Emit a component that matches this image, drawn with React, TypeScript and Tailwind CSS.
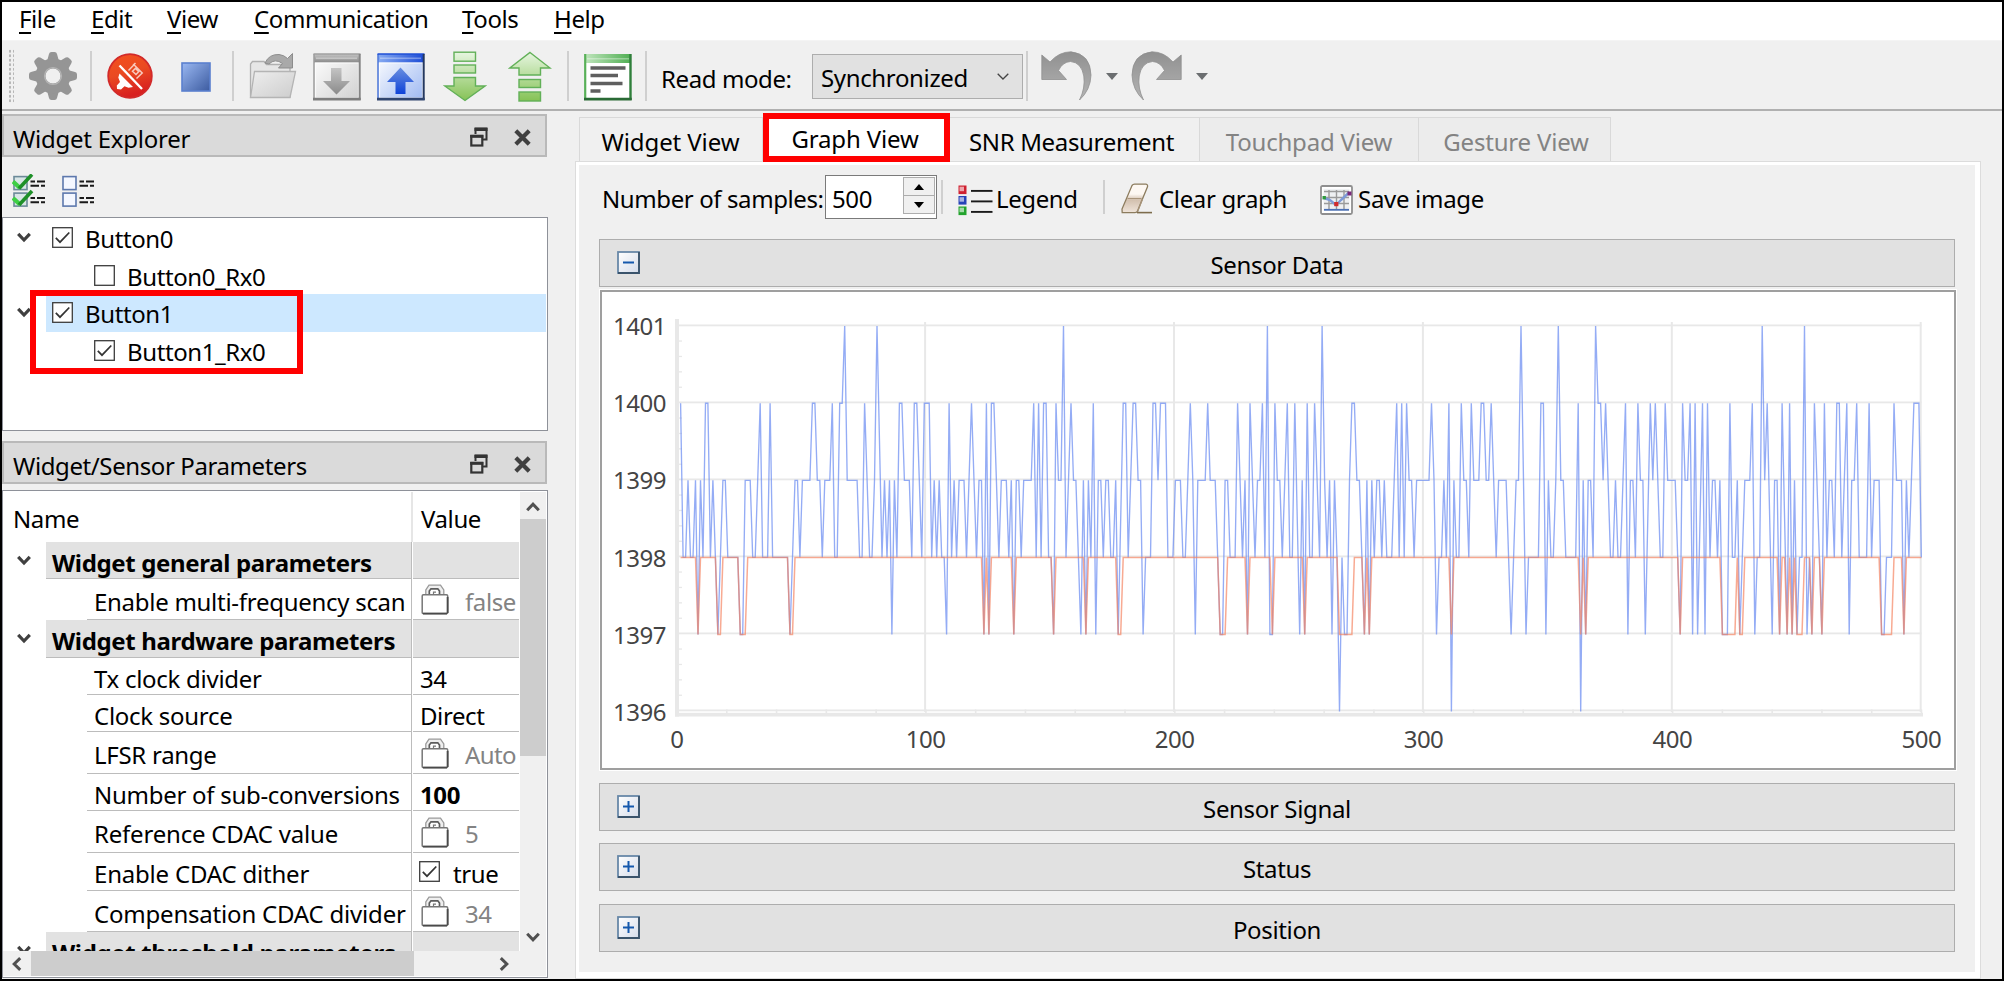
import React from "react";

/* ---------- chart data: "sample:level" pairs, level counted up from 1396 ---------- */

const RAW_POINTS = `
1:4 2:2 3:2 4:3 5:2 6:2 7:3 8:1 9:3 10:2 11:4 12:4 13:2 14:3 15:2 16:1 18:3 19:3 20:2 24:2 25:1 26:1 27:3 29:3 30:2 31:2
33:4 34:2 36:2 37:4 38:2 44:2 45:1 47:3 48:3 49:2 50:3 53:3 54:4 55:4 56:3 57:3 58:2 59:3 61:3 62:4 63:2 64:2 65:4 66:4
67:5 68:3 72:3 73:2 74:2 75:4 77:2 78:2 79:3 80:5 82:2 83:3 84:2 85:3 86:1 87:3 88:2 89:4 90:4 91:3 93:3 94:2 95:4 96:4
98:2 99:4 101:4 102:2 103:3 104:2 105:3 106:2 107:2 108:1 109:4 110:2 111:3 112:2 113:3 115:3 116:2 118:4 120:2 121:3
122:3 123:1 124:4 125:1 126:4 127:4 129:2 130:3 132:3 133:2 134:3 135:1 136:3 137:3 138:2 139:3 142:3 143:4 144:2 145:4
146:2 147:4 148:4 149:2 150:2 151:1 152:4 153:3 154:3 155:5 156:2 158:4 159:3 160:3 162:1 163:3 164:1 165:3 166:2 167:4
168:1 169:3 170:3 171:2 172:3 173:3 174:2 175:2 176:3 177:1 179:4 180:4 181:2 183:4 184:4 185:3 186:3 187:1 188:2 190:2
191:4 192:4 193:3 194:4 196:4 197:2 199:2 200:3 202:3 203:2 204:2 206:4 207:3 208:1 209:3 212:3 213:4 214:3 216:3 217:2
218:1 219:1 220:3 221:3 222:2 224:2 225:4 227:2 228:3 229:1 230:4 232:2 233:3 234:3 235:4 236:2 237:5 238:1 239:1 240:4
241:3 242:3 243:2 245:4 246:2 247:2 248:4 250:1 251:3 252:1 253:4 254:2 255:2 256:4 258:2 259:5 260:3 261:2 262:3 263:1
264:3 265:2 266:0 267:2 268:1 269:1 270:3 271:4 272:4 273:3 274:3 275:2 276:1 277:3 278:1 279:3 280:2 281:3 282:3 283:2
284:3 285:2 287:2 289:4 290:2 291:4 292:2 293:4 294:3 295:3 296:2 297:3 302:3 303:4 304:3 305:1 306:2 307:2 308:3 309:2
310:4 311:0 312:3 313:2 314:2 315:4 316:3 317:3 318:2 319:4 320:3 322:3 323:4 324:4 325:3 326:3 327:4 329:2 330:3 333:3
335:1 337:3 338:3 339:5 341:1 342:2 346:2 347:4 348:4 349:1 350:3 351:2 352:2 353:3 354:5 355:3 356:3 357:2 361:2 362:4
363:0 364:3 365:1 366:3 367:3 368:2 369:5 370:4 371:4 372:3 373:4 375:2 376:2 377:3 378:2 379:2 380:3 381:4 382:1 383:3
384:3 385:2 386:4 387:3 388:3 389:1 391:4 392:3 393:4 395:2 396:2 397:4 398:3 401:3 403:1 404:4 405:3 406:3 407:4 408:1
409:4 410:1 412:4 413:1 414:4 415:2 416:3 417:3 418:2 419:3 420:1 422:1 423:4 424:2 425:2 426:3 427:1 428:2 429:3 431:3
432:4 433:1 434:2 435:2 436:5 437:3 438:4 440:1 441:3 442:3 443:1 444:4 446:1 447:4 448:1 449:3 450:1 451:2 452:2 453:5
454:1 455:2 456:1 457:4 460:1 461:4 462:2 463:3 464:3 465:2 466:4 467:4 468:2 470:4 471:1 472:3 473:3 474:4 475:2 478:2
479:4 480:2 481:3 483:3 484:1 485:1 486:2 488:2 489:4 490:3 492:3 493:1 494:3 495:2 497:4 499:4 500:2`;

/* Spans of samples where the baseline drops from 1398 to 1397. */
const BASELINE_DIPS: [number, number][] = [
  [8, 8], [16, 17], [25, 27], [45, 46], [123, 123], [125, 125], [135, 135], [151, 151], [164, 164],
  [177, 178], [218, 220], [229, 229], [239, 239], [252, 252], [266, 271], [276, 276], [278, 278],
  [311, 311], [363, 363], [365, 365], [403, 403], [420, 425], [427, 428], [443, 443], [446, 446],
  [448, 448], [450, 452], [456, 456], [460, 460], [484, 488], [493, 493],
];

const sx = (i: number) => 678.1 + i * 2.4865;
const sy = (level: number) => 711.6 - level * 77.1;
const toPoint = (i: number, level: number) => `${sx(i).toFixed(1)},${sy(level).toFixed(1)}`;

const rawLine = RAW_POINTS.trim()
  .split(/\s+/)
  .map((p) => p.split(":").map(Number))
  .map(([i, v]) => toPoint(i, v))
  .join(" ");

const baseLine = [
  toPoint(1, 2),
  ...BASELINE_DIPS.flatMap(([a, b]) => [toPoint(a - 1, 2), toPoint(a, 1), toPoint(b, 1), toPoint(b + 1, 2)]),
  toPoint(500, 2),
].join(" ");

function Chart() {
  const xs = [0, 100, 200, 300, 400, 500];
  const ys = [0, 1, 2, 3, 4, 5];
  return (
    <svg className="block" width="1352" height="476" viewBox="602 292 1352 476">
      <g fill="#e8e8e8">
        {ys.map((v) => (
          <rect key={v} x="679" y={709.5 - v * 77} width="1242.5" height="1.8" />
        ))}
        {xs.slice(1).map((v) => (
          <rect key={v} x={675.2 + v * 2.489} y="322" width="2" height="390" />
        ))}
        {ys.slice(0, 5).flatMap((v) =>
          [1, 2, 3, 4].map((k) => (
            <rect key={`${v}-${k}`} x="679" y={710 - v * 77 - k * 15.4} width="3" height="1.3" />
          )),
        )}
        {Array.from({ length: 25 }, (_, k) => (
          <rect key={k} x={676.2 + (k + 1) * 49.78} y="709.5" width="1.6" height="4" />
        ))}
        <rect x="675" y="319" width="4" height="397.5" />
        <rect x="675" y="712.8" width="1248" height="3.7" />
      </g>
      <polyline points={rawLine} fill="none" stroke="#6f8ff2" strokeOpacity="0.74" strokeWidth="1.35" />
      <polyline points={baseLine} fill="none" stroke="#f4825f" strokeOpacity="0.68" strokeWidth="1.5" />
      <g fill="#444" fontSize="24" letterSpacing="-0.5">
        {ys.map((v) => (
          <text key={v} x="666" y={720.7 - v * 77.1} textAnchor="end">
            {1396 + v}
          </text>
        ))}
        {xs.map((v) => (
          <text key={v} x={676.8 + v * 2.489} y="747.6" textAnchor="middle">
            {v}
          </text>
        ))}
      </g>
    </svg>
  );
}

/* ---------- icons ---------- */

const Gradients = () => (
  <svg width="0" height="0" className="absolute">
    <defs>
      <linearGradient id="gRed" x1="0" y1="0" x2="0.3" y2="1">
        <stop offset="0" stopColor="#f4511e" />
        <stop offset="0.5" stopColor="#ea4a22" />
        <stop offset="1" stopColor="#d8201f" />
      </linearGradient>
      <linearGradient id="gStop" x1="0" y1="0" x2="1" y2="1">
        <stop offset="0" stopColor="#9ab8f2" />
        <stop offset="1" stopColor="#3c5ba0" />
      </linearGradient>
      <linearGradient id="gFolder" x1="0" y1="0" x2="1" y2="1">
        <stop offset="0" stopColor="#eeeeee" />
        <stop offset="1" stopColor="#cdcdcd" />
      </linearGradient>
      <linearGradient id="gGray" x1="0" y1="0" x2="0" y2="1">
        <stop offset="0" stopColor="#c4c4c4" />
        <stop offset="1" stopColor="#8a8a8a" />
      </linearGradient>
      <linearGradient id="gGrayBody" x1="0" y1="0" x2="1" y2="1">
        <stop offset="0" stopColor="#ffffff" />
        <stop offset="1" stopColor="#d0d0d0" />
      </linearGradient>
      <linearGradient id="gBlueBar" x1="0" y1="0" x2="1" y2="0">
        <stop offset="0" stopColor="#86aaf2" />
        <stop offset="1" stopColor="#1c4bd6" />
      </linearGradient>
      <linearGradient id="gBlueBody" x1="0" y1="0" x2="1" y2="1">
        <stop offset="0" stopColor="#ffffff" />
        <stop offset="1" stopColor="#9db8f2" />
      </linearGradient>
      <linearGradient id="gBlueArrow" x1="0" y1="0" x2="0" y2="1">
        <stop offset="0" stopColor="#6a8fe0" />
        <stop offset="1" stopColor="#0f43d8" />
      </linearGradient>
      <linearGradient id="gGreen" gradientUnits="userSpaceOnUse" x1="0" y1="0" x2="0" y2="50">
        <stop offset="0" stopColor="#e9f7e4" />
        <stop offset="1" stopColor="#85c255" />
      </linearGradient>
      <linearGradient id="gGreenBar" x1="0" y1="0" x2="1" y2="0">
        <stop offset="0" stopColor="#bfe5bc" />
        <stop offset="1" stopColor="#4fae52" />
      </linearGradient>
      <linearGradient id="gUndo" x1="0" y1="0" x2="0" y2="1">
        <stop offset="0" stopColor="#909090" />
        <stop offset="1" stopColor="#b4b4b4" />
      </linearGradient>
      <linearGradient id="gBox" x1="0" y1="0" x2="1" y2="1">
        <stop offset="0" stopColor="#ffffff" />
        <stop offset="1" stopColor="#d5dcea" />
      </linearGradient>
      <linearGradient id="gEraser" x1="0" y1="0" x2="0" y2="1">
        <stop offset="0.35" stopColor="#fdf8f3" />
        <stop offset="0.55" stopColor="#d2c0ae" />
        <stop offset="1" stopColor="#efe4da" />
      </linearGradient>
    </defs>
  </svg>
);

function GearIcon() {
  return (
    <svg className="shrink-0" width="48" height="50" viewBox="-24 -25 48 50">
      <g fill="#959595">
        {[0, 45, 90, 135, 180, 225, 270, 315].map((a) => (
          <path key={a} transform={`rotate(${a})`} d="M-6.2-14 L-4-22 Q-3.6-24-1.5-24 H1.5 Q3.6-24 4-22 L6.2-14Z" />
        ))}
        <path fillRule="evenodd" d="M0-17.5A17.5 17.5 0 1 0 0 17.5A17.5 17.5 0 1 0 0-17.5ZM0-7.6A7.6 7.6 0 1 1 0 7.6A7.6 7.6 0 1 1 0-7.6Z" />
      </g>
      <circle r="8.4" fill="none" stroke="#b5b5b5" strokeWidth="1.4" />
    </svg>
  );
}

function DisconnectIcon() {
  return (
    <svg className="shrink-0" width="46" height="46" viewBox="0 0 46 46">
      <circle cx="23" cy="23" r="21.8" fill="url(#gRed)" stroke="#d22a2a" strokeWidth="1.8" />
      <path d="M12.5 20.5 L26 34 L21.5 34.8 L17.5 33.2 L14 36.6 L10 36 L9.8 32.5 L13 29 L11.3 24.5Z" fill="#fff" />
      <path d="M12.5 12.5 L35 36" stroke="#fff" strokeWidth="2.4" />
      <path d="M21.5 17.5 L27 11.8 L35.2 20 L29.5 25.5 M25.5 18.2 L28.5 15.4 L31.8 18.6 L29 21.5Z M26 12.4 L28.5 10" stroke="#f9c9bd" strokeWidth="1.5" fill="none" />
    </svg>
  );
}

function StopIcon() {
  return (
    <svg className="shrink-0" width="30" height="30" viewBox="0 0 30 30">
      <rect x="1" y="1" width="28" height="28" fill="url(#gStop)" stroke="#5b80cf" strokeWidth="1.6" />
    </svg>
  );
}

function OpenIcon() {
  return (
    <svg className="shrink-0" width="48" height="48" viewBox="0 0 48 48">
      <path d="M1.5 45 V12 L3.5 9.5 H15 L17.5 12.5 H41 V45Z" fill="#e6e6e6" stroke="#b0b0b0" strokeWidth="1.3" />
      <path d="M5.5 19.5 H46.5 L41 45.5 H1.5Z" fill="url(#gFolder)" stroke="#b4b4b4" strokeWidth="1.3" />
      <path d="M16 11 Q20 2 30 2.5 Q35 3 38.5 6.5 L43.5 1.5 V16 H29.5 L33.5 11.5 Q26 6 20 12Z" fill="#a9a9a9" stroke="#8d8d8d" strokeWidth="1" />
    </svg>
  );
}

function WindowArrowIcon({ up }: { up?: boolean }) {
  return (
    <svg className="shrink-0" width="48" height="48" viewBox="0 0 48 48">
      <rect x="1" y="1" width="46" height="46" fill={up ? "url(#gBlueBody)" : "url(#gGrayBody)"} />
      <rect x="1" y="1" width="46" height="8.5" fill={up ? "url(#gBlueBar)" : "url(#gGray)"} />
      <rect x="3" y="4.5" width="41" height="1.6" fill="#fff" opacity="0.35" />
      <rect x="2.5" y="10" width="43" height="35" fill="none" stroke="#fff" strokeWidth="1.2" opacity="0.7" />
      <path d="M1 47 V1" stroke={up ? "#4b76d8" : "#9c9c9c"} strokeWidth="1.5" />
      <path d="M0.5 1 H47.5" stroke={up ? "#1f4fd6" : "#a0a0a0"} strokeWidth="1.5" />
      <path d="M46.7 1 V47" stroke={up ? "#24385f" : "#858585"} strokeWidth="2" />
      <path d="M0 46.2 H47.7" stroke={up ? "#30456f" : "#7d7d7d"} strokeWidth="2.8" />
      {up ? (
        <path d="M23.5 14.5 L37 29 H28.5 V41 H18.5 V29 H10Z" fill="url(#gBlueArrow)" />
      ) : (
        <path d="M18 15 H28.5 V28 H37 L23.5 41.5 L10 28 H18Z" fill="url(#gGray)" />
      )}
    </svg>
  );
}

function GreenArrowIcon({ up }: { up?: boolean }) {
  return up ? (
    <svg className="shrink-0" width="44" height="51" viewBox="0 0 44 51" fill="url(#gGreen)" stroke="#62b058" strokeWidth="1.4">
      <path d="M22 1.5 L42 17 H32.5 V24 H11 V17 H1.8Z" />
      <rect x="11" y="28.5" width="21.5" height="8" />
      <rect x="11" y="41" width="21.5" height="9" />
    </svg>
  ) : (
    <svg className="shrink-0" width="44" height="51" viewBox="0 0 44 51" fill="url(#gGreen)" stroke="#62b058" strokeWidth="1.4">
      <rect x="11" y="1.2" width="21.5" height="9" />
      <rect x="11" y="14" width="21.5" height="8" />
      <path d="M11 26.5 H32.5 V35 H42 L22 49.5 L1.8 35 H11Z" />
    </svg>
  );
}

function LogIcon() {
  return (
    <svg className="shrink-0" width="48" height="48" viewBox="0 0 48 48">
      <rect x="1" y="1" width="46" height="46" fill="#fff" />
      <rect x="1" y="1" width="46" height="9" fill="url(#gGreenBar)" />
      <rect x="3" y="5" width="42" height="1.5" fill="#fff" opacity="0.35" />
      <path d="M1.2 47 V1" stroke="#58b058" strokeWidth="2.2" />
      <path d="M46.5 1 V47" stroke="#2f7f3a" strokeWidth="2.4" />
      <path d="M0 46.2 H47.7" stroke="#2a6a35" strokeWidth="2.8" />
      <path d="M6.5 15 H41.5 M6.5 22.5 H34 M6.5 30.5 H38.5 M6.5 38 H16.5" stroke="#5f5f5f" strokeWidth="3.4" />
    </svg>
  );
}

function UndoIcon({ redo }: { redo?: boolean }) {
  return (
    <svg className={redo ? "shrink-0 -scale-x-100" : "shrink-0"} width="51" height="50" viewBox="0 0 51 50">
      <path
        d="M0.8 4 L9 11 Q18 0.8 30 0.8 Q49.5 3 50 24 Q49.5 39 38.5 49 Q44.5 37 42.8 25 Q40.5 11.5 29.5 10.5 Q21.5 11 17.5 19.5 L25.5 28.5 H0.8Z"
        fill="url(#gUndo)"
        stroke="#8f8f8f"
        strokeWidth="0.8"
      />
    </svg>
  );
}

const CaretDown = () => (
  <svg className="shrink-0" width="12" height="7" viewBox="0 0 12 7">
    <path d="M0 0 H12 L6 7Z" fill="#6b6e70" />
  </svg>
);

function FloatIcon() {
  return (
    <svg className="shrink-0" width="18" height="20" viewBox="0 0 18 20" fill="none" stroke="#333">
      <path d="M5.5 7 V2 H16.5 V12.5 H12.5" strokeWidth="2" />
      <path d="M4.5 2.2 H17.5" strokeWidth="3.6" />
      <rect x="1.3" y="9" width="11" height="9.5" strokeWidth="2.2" />
      <path d="M0.2 9.3 H13.4" strokeWidth="3" />
    </svg>
  );
}

const CloseIcon = () => (
  <svg className="shrink-0" width="17" height="17" viewBox="0 0 17 17">
    <path d="M1.8 1.8 L15.2 15.2 M15.2 1.8 L1.8 15.2" stroke="#404040" strokeWidth="4.2" />
  </svg>
);

function CheckListIcon({ checked }: { checked?: boolean }) {
  return (
    <svg className="shrink-0" width="35" height="34" viewBox="0 0 35 34">
      {[0, 16.5].map((dy) => (
        <g key={dy} transform={`translate(0 ${dy})`}>
          <rect x="2" y="2.6" width="13" height="13" fill={checked ? "#d9e6e6" : "#f4f7ff"} stroke={checked ? "#6c8a99" : "#5d78ad"} strokeWidth="1.6" />
          <path d="M18.5 7.5 H23 M25 7.5 H33 M18.5 11.8 H27 M29 11.8 H33" stroke="#1a1a1a" strokeWidth="2" />
          {checked && (
            <>
              <path d="M1 7.5 L8 14" stroke="#3fcf45" strokeWidth="4.2" />
              <path d="M7 14.5 L20 0.5" stroke="#1e9028" strokeWidth="3.6" />
            </>
          )}
        </g>
      ))}
    </svg>
  );
}

function Chevron({ className = "" }: { className?: string }) {
  return (
    <svg className={`shrink-0 ${className}`} width="14" height="11" viewBox="0 0 14 11">
      <path d="M1.2 1.8 L7 8 L12.8 1.8" fill="none" stroke="#404040" strokeWidth="3.2" />
    </svg>
  );
}

function LockIcon() {
  return (
    <svg className="shrink-0" width="28" height="31" viewBox="0 0 28 31" fill="none">
      <path d="M4.8 11 V6 L8 1.2 H19.5 L22.8 6 V11" stroke="#9a9a9a" strokeWidth="1.3" fill="#efefef" />
      <path d="M8.3 11 V7 L10 4.8 H16.8 L18.5 7 V11" stroke="#5d5d5d" strokeWidth="1.7" fill="#fff" />
      <path d="M12.5 10.5 V8.2 H15" stroke="#777" strokeWidth="1.2" />
      <rect x="1.2" y="10.8" width="25.5" height="18.8" rx="1.2" fill="#fff" stroke="#777" strokeWidth="1.5" />
      <path d="M2 29.6 H26 M26.6 13 V29" stroke="#4a4a4a" strokeWidth="1.8" />
    </svg>
  );
}

function CheckBox({ checked }: { checked?: boolean }) {
  return (
    <svg className="shrink-0" width="21" height="21" viewBox="0 0 21 21">
      <rect x="0.7" y="0.7" width="19.6" height="19.6" fill="#fff" stroke="#3c3c3c" strokeWidth="1.3" />
      {checked && <path d="M3.8 10.8 L8 15.2 L17.3 5.5" fill="none" stroke="#333" strokeWidth="1.7" />}
    </svg>
  );
}

function ExpandIcon({ open }: { open?: boolean }) {
  return (
    <svg className="shrink-0" width="23" height="23" viewBox="0 0 23 23">
      <rect x="1" y="1" width="21" height="21" fill="url(#gBox)" stroke="#6888a8" strokeWidth="1.8" />
      <path d="M22 1 V22 H1" fill="none" stroke="#3a536b" strokeWidth="1.8" />
      <path d="M6 11.5 H17" stroke="#1558ad" strokeWidth="2" />
      {!open && <path d="M11.5 6 V17" stroke="#1558ad" strokeWidth="2" />}
    </svg>
  );
}

function LegendIcon() {
  return (
    <svg className="shrink-0" width="35" height="31" viewBox="0 0 35 31">
      {["#cf2030", "#2743b8", "#22a32c"].map((c, k) => (
        <g key={c} transform={`translate(0.5 ${0.5 + k * 10.5})`}>
          <rect width="8" height="8.6" fill={c} />
          <rect x="1" y="1.2" width="4.5" height="4.5" fill="#fff" opacity="0.6" />
          <path d="M12.5 5.4 H34" stroke="#1a1a1a" strokeWidth="1.9" />
        </g>
      ))}
    </svg>
  );
}

function EraserIcon() {
  return (
    <svg className="shrink-0" width="32" height="31" viewBox="0 0 32 31">
      <path d="M11 2.5 Q12 1.2 13.5 1.2 H25 Q27 1.5 26.5 3.8 L16.5 28 Q15.8 29.6 14 29.6 H1.2 L1 26Z" fill="url(#gEraser)" stroke="#8c7c5e" strokeWidth="1.3" />
      <path d="M6.5 15.5 H20.5 M16.5 29 L21.5 16" stroke="#a8947a" strokeWidth="1.2" />
      <path d="M16 29.6 H31" stroke="#7d6c4c" strokeWidth="1.6" />
    </svg>
  );
}

function SaveImageIcon() {
  return (
    <svg className="shrink-0" width="33" height="30" viewBox="0 0 33 30">
      <rect x="1" y="1" width="31" height="28" rx="1.5" fill="#fff" stroke="#8f8f8f" strokeWidth="1.8" />
      <rect x="3.5" y="3.8" width="26" height="22" fill="#eef0f2" />
      <path d="M4 6.5 H29 M4 12.5 H29 M4 18.5 H29 M9 5 V24 M16.5 5 V24 M24 5 V24" stroke="#9a9a9a" strokeWidth="1.4" />
      <path d="M4 13 L10 15 L16 20 L21 15 L29 7.5" fill="none" stroke="#7d9ad8" strokeWidth="2.4" />
      <path d="M4 24.8 H29" stroke="#4a6fb5" strokeWidth="1.8" />
      <rect x="2.5" y="11" width="3.4" height="3.4" fill="#2d9a3c" />
      <rect x="14.2" y="17" width="4.2" height="4.2" fill="#d22b2b" />
      <rect x="27.5" y="6.5" width="4" height="4" fill="#7a2a7a" />
    </svg>
  );
}

/* ---------- panels ---------- */

const Separator = ({ className }: { className: string }) => <div className={`w-[2px] shrink-0 bg-[#cfcfcf] ${className}`} />;

function MenuBar() {
  const items: [string, string][] = [
    ["File", "w-[72px] tracking-[-0.4px]"],
    ["Edit", "w-[76px] tracking-[-0.4px]"],
    ["View", "w-[87px] tracking-[-0.4px]"],
    ["Communication", "w-[208px] tracking-[-0.4px]"],
    ["Tools", "w-[92px] tracking-[-0.4px]"],
    ["Help", "w-[80px] tracking-[-0.4px]"],
  ];
  return (
    <div className="flex h-[39px] shrink-0 items-center border-b border-[#f4f4f4] bg-white pb-[4px] pl-[17px]">
      {items.map(([label, cls]) => (
        <div key={label} className={cls}>
          <span className="underline decoration-2 underline-offset-[4px]">{label[0]}</span>
          {label.slice(1)}
        </div>
      ))}
    </div>
  );
}

function ToolBar() {
  return (
    <div className="flex h-[70px] shrink-0 items-center border-b-2 border-[#b0b0b0] pt-[2px] pl-[6px]">
      <div className="mr-[15px] h-[54px] w-[6px] bg-[radial-gradient(circle,#b4b4b4_1px,transparent_1.3px)] bg-size-[4px_4.5px]" />
      <GearIcon />
      <Separator className="mr-[15px] ml-[13px] h-[50px]" />
      <DisconnectIcon />
      <div className="ml-[28px] pt-[1px]"><StopIcon /></div>
      <Separator className="mr-[15px] ml-[21px] h-[50px]" />
      <OpenIcon />
      <div className="ml-[16px] pt-[2px]"><WindowArrowIcon /></div>
      <div className="ml-[16px] pt-[2px]"><WindowArrowIcon up /></div>
      <div className="ml-[18px] pt-[1px]"><GreenArrowIcon /></div>
      <div className="ml-[21px] pt-[1px]"><GreenArrowIcon up /></div>
      <Separator className="mr-[15px] ml-[15px] h-[50px]" />
      <div className="pt-[2px]"><LogIcon /></div>
      <Separator className="ml-[13px] h-[50px]" />
      <div className="ml-[14px] w-[151px] pt-[5px] tracking-[-0.4px]">Read mode:</div>
      <div className="flex h-[45px] w-[211px] shrink-0 items-center justify-between border-[1.5px] border-[#adadad] bg-[#e1e1e1] pr-[13px] pl-[8px]">
        <span className="pt-[3px] tracking-[-0.35px]">Synchronized</span>
        <svg width="12" height="7" viewBox="0 0 12 7">
          <path d="M0.7 0.7 L6 6 L11.3 0.7" fill="none" stroke="#444" strokeWidth="1.3" />
        </svg>
      </div>
      <Separator className="ml-[3px] h-[50px]" />
      <div className="ml-[13px]"><UndoIcon /></div>
      <div className="ml-[14px]"><CaretDown /></div>
      <div className="ml-[13px]"><UndoIcon redo /></div>
      <div className="ml-[14px]"><CaretDown /></div>
    </div>
  );
}

function DockTitle({ children, track }: { children: React.ReactNode; track: string }) {
  return (
    <div className="flex h-[43px] w-[545px] shrink-0 items-center border-2 border-[#b9b9b9] bg-[#dadada] pl-[9px]">
      <span className={`grow pt-[6px] ${track}`}>{children}</span>
      <div className="pt-[2px]"><FloatIcon /></div>
      <div className="mr-[14px] ml-[26px] pt-[3px]"><CloseIcon /></div>
    </div>
  );
}

function TreeRow({ label, child, checked, selected }: { label: string; child?: boolean; checked?: boolean; selected?: boolean }) {
  return (
    <div className="flex h-[37.5px] items-center">
      <div className="w-[43px] shrink-0 pl-[14px]">{!child && <Chevron className="mb-[1px]" />}</div>
      <div className={`flex h-full grow items-center ${child ? "pl-[48px]" : "pl-[6px]"} ${selected ? "mr-px bg-[#cde8ff]" : ""}`}>
        <CheckBox checked={checked} />
        <span className="ml-[12px] pt-[3px] tracking-[-0.4px]">{label}</span>
      </div>
    </div>
  );
}

type Param = { name: string; value?: string; h: string; kind?: "group" | "lock" | "check" | "bold"; track?: string };

const PARAMS: Param[] = [
  { name: "Widget general parameters", h: "h-[37px]", kind: "group" },
  { name: "Enable multi-frequency scan", value: "false", h: "h-[41px]", kind: "lock" },
  { name: "Widget hardware parameters", h: "h-[38px]", kind: "group" },
  { name: "Tx clock divider", value: "34", h: "h-[37px]" },
  { name: "Clock source", value: "Direct", h: "h-[37px]" },
  { name: "LFSR range", value: "Auto", h: "h-[42px]", kind: "lock" },
  { name: "Number of sub-conversions", value: "100", h: "h-[37px]", kind: "bold" },
  { name: "Reference CDAC value", value: "5", h: "h-[42px]", kind: "lock", track: "tracking-[-0.2px]" },
  { name: "Enable CDAC dither", value: "true", h: "h-[38px]", kind: "check", track: "tracking-[-0.2px]" },
  { name: "Compensation CDAC divider", value: "34", h: "h-[41px]", kind: "lock", track: "tracking-[-0.2px]" },
  { name: "Widget threshold parameters", h: "h-[37px]", kind: "group" },
];

function ParamRow({ name, value, h, kind, track = "tracking-[-0.28px]" }: Param) {
  const group = kind === "group";
  const cell = `flex items-center border-b-[1.5px] border-[#bcbcbc] ${group ? "bg-[#e2e2e2]" : ""}`;
  return (
    <div className={`flex shrink-0 whitespace-nowrap ${h}`}>
      <div className={`shrink-0 pt-[13px] ${group ? "w-[43px]" : "w-[84px]"} pl-[14px]`}>{group && <Chevron />}</div>
      <div className={`${cell} grow border-r-[1.5px] ${group ? "pl-[6px]" : "pl-[7px]"}`}>
        <span className={group ? "pt-[5px] font-bold tracking-[-0.35px]" : `pt-[5px] ${track}`}>{name}</span>
      </div>
      <div className={`${cell} ml-px w-[106px] shrink-0 overflow-hidden pl-[7px]`}>
        {kind === "lock" && <div className="mr-[16px] ml-[1px] pt-[1px]"><LockIcon /></div>}
        {kind === "check" && <div className="mr-[13px] -ml-[1px]"><CheckBox checked /></div>}
        <span
          className={`pt-[5px] ${value === "Auto" ? "tracking-[-0.6px]" : "tracking-[-0.4px]"} ${kind === "lock" ? "text-[#838383]" : ""} ${
            kind === "bold" ? "font-bold" : ""
          }`}
        >
          {value}
        </span>
      </div>
    </div>
  );
}

function ScrollArrow({ className }: { className: string }) {
  return (
    <svg className={`shrink-0 ${className}`} width="14" height="10" viewBox="0 0 14 10">
      <path d="M1.2 8.2 L7 2.2 L12.8 8.2" fill="none" stroke="#505050" strokeWidth="3" />
    </svg>
  );
}

function ParamTable() {
  return (
    <div className="mt-[6px] flex h-[488px] w-[546px] shrink-0 flex-col border-[1.5px] border-[#8e9199] bg-white">
      <div className="flex h-[460px] shrink-0">
        <div className="flex w-[516px] shrink-0 flex-col overflow-hidden">
          <div className="flex h-[51px] shrink-0 pt-[1px]">
            <div className="w-[410px] shrink-0 border-r-2 border-[#e6e6e6] pt-[11px] pl-[10px] tracking-[-0.4px]">Name</div>
            <div className="pt-[11px] pl-[8px] tracking-[-0.4px]">Value</div>
          </div>
          {PARAMS.map((p) => (
            <ParamRow key={p.name} {...p} />
          ))}
        </div>
        <div className="mt-[1px] ml-[1px] flex w-[26px] flex-col items-center bg-[#f0f0f0]">
          <ScrollArrow className="mt-[10px] mb-[7px]" />
          <div className="h-[237px] w-full bg-[#cdcdcd]" />
          <ScrollArrow className="mt-auto mb-[9px] rotate-180" />
        </div>
      </div>
      <div className="flex h-[25px] w-[543px] items-center bg-[#f0f0f0]">
        <ScrollArrow className="mr-[7px] ml-[7px] -rotate-90" />
        <div className="h-full w-[383px] bg-[#cdcdcd]" />
        <ScrollArrow className="ml-[83px] rotate-90" />
      </div>
    </div>
  );
}

function LeftColumn() {
  return (
    <div className="relative flex w-[573px] shrink-0 flex-col pt-[3px]">
      <DockTitle track="tracking-[-0.25px]">Widget Explorer</DockTitle>
      <div className="flex h-[60px] shrink-0 items-center gap-[14px] pt-[7px] pl-[10px]">
        <CheckListIcon checked />
        <CheckListIcon />
      </div>
      <div className="h-[214px] w-[546px] shrink-0 border-[1.5px] border-[#8e9199] bg-white pt-[1px]">
        <TreeRow label="Button0" checked />
        <TreeRow label="Button0_Rx0" child />
        <TreeRow label="Button1" checked selected />
        <TreeRow label="Button1_Rx0" child checked />
      </div>
      <div className="h-[10px] shrink-0" />
      <DockTitle track="tracking-[-0.4px]">Widget/Sensor Parameters</DockTitle>
      <ParamTable />
      <div className="absolute top-[179px] left-[28px] h-[84px] w-[273px] border-6 border-[#ff0000]" />
    </div>
  );
}

function Tab({ label, className }: { label: string; className: string }) {
  return (
    <div className={`flex h-[44px] shrink-0 items-center justify-center border-t border-r border-[#d9d9d9] ${className}`}>
      {label}
    </div>
  );
}

function SectionHeader({ title, open, className = "" }: { title: string; open?: boolean; className?: string }) {
  return (
    <div className={`grid h-[48px] w-[1356px] shrink-0 grid-cols-[17px_23px_1fr_40px] items-center border-[1.5px] border-[#adadad] bg-[#e1e1e1] ${className}`}>
      <div />
      <div className="pb-[2px]"><ExpandIcon open={open} /></div>
      <div className="pt-[3px] text-center tracking-[-0.35px]">{title}</div>
      <div />
    </div>
  );
}

function SpinBox() {
  return (
    <div className="flex h-[44px] w-[112px] shrink-0 items-center justify-between border-[1.5px] border-[#7a7a7a] bg-white pr-[1px] pl-[6px]">
      <span className="pt-[4px] tracking-[-0.4px]">500</span>
      <div className="mb-[3px] flex h-[37px] w-[32px] flex-col border-[1.5px] border-[#adadad] bg-[#f0f0f0]">
        <div className="flex flex-1 items-center justify-center border-b-[1.5px] border-[#adadad]">
          <svg width="10" height="6" viewBox="0 0 10 6"><path d="M0 6 L5 0 L10 6Z" /></svg>
        </div>
        <div className="flex flex-1 items-center justify-center">
          <svg width="10" height="6" viewBox="0 0 10 6"><path d="M0 0 L5 6 L10 0Z" /></svg>
        </div>
      </div>
    </div>
  );
}

function RightColumn() {
  return (
    <div className="relative flex grow flex-col pt-[6px]">
      <div className="flex pl-[4px]">
        <Tab label="Widget View" className="w-[184px] border-l pt-[4px] pr-[1px] tracking-[-0.1px]" />
        <Tab label="Graph View" className="w-[187px] bg-white pr-[2px] pb-[1px] tracking-[-0.15px]" />
        <Tab label="SNR Measurement" className="w-[250px] pt-[4px] pr-[6px] tracking-[-0.33px]" />
        <Tab label="Touchpad View" className="w-[219px] bg-[#ececec] pt-[4px] text-[#838383] tracking-[-0.2px]" />
        <Tab label="Gesture View" className="w-[192px] bg-[#ececec] pt-[4px] pl-[3px] text-[#838383] tracking-[-0.2px]" />
      </div>
      <div className="h-[818px] w-[1406px] border border-[#dcdcdc] bg-white pt-[3px] pr-[5px] pb-[6px] pl-[3px]">
        <div className="flex h-full flex-col bg-[#f0f0f0] pl-[20px]">
          <div className="flex h-[64px] shrink-0 items-center">
            <span className="w-[226px] shrink-0 pt-[4px] pl-[3px] tracking-[-0.4px]">Number of samples:</span>
            <SpinBox />
            <Separator className="ml-[4px] h-[34px]" />
            <div className="ml-[15px] pt-[6px]"><LegendIcon /></div>
            <span className="w-[110px] pt-[4px] pl-[3px] tracking-[-0.4px]">Legend</span>
            <Separator className="mr-[16px] h-[34px]" />
            <div className="pt-[3px]"><EraserIcon /></div>
            <span className="w-[167px] pt-[4px] pl-[6px] tracking-[-0.35px]">Clear graph</span>
            <div className="pt-[6px]"><SaveImageIcon /></div>
            <span className="pt-[4px] pl-[5px] tracking-[-0.3px]">Save image</span>
          </div>
          <SectionHeader title="Sensor Data" open className="mt-[10px]" />
          <div className="mt-[2px] w-[1358px] shrink-0 border border-white">
            <div className="border-2 border-[#9f9f9f] bg-white">
              <Chart />
            </div>
          </div>
          <SectionHeader title="Sensor Signal" className="mt-[12px]" />
          <SectionHeader title="Status" className="mt-[12px]" />
          <SectionHeader title="Position" className="mt-[13px]" />
        </div>
      </div>
      <div className="absolute top-[2px] left-[188px] h-[49px] w-[187px] border-6 border-[#ff0000]" />
    </div>
  );
}

export default function App() {
  return (
    <div className="flex h-[981px] w-[2004px] flex-col overflow-hidden border-2 border-black bg-[#f0f0f0] font-['Noto_Sans','Open_Sans',sans-serif] text-[24px] leading-[32px] text-black">
      <Gradients />
      <MenuBar />
      <ToolBar />
      <div className="flex h-[868px] shrink-0">
        <LeftColumn />
        <RightColumn />
      </div>
    </div>
  );
}
